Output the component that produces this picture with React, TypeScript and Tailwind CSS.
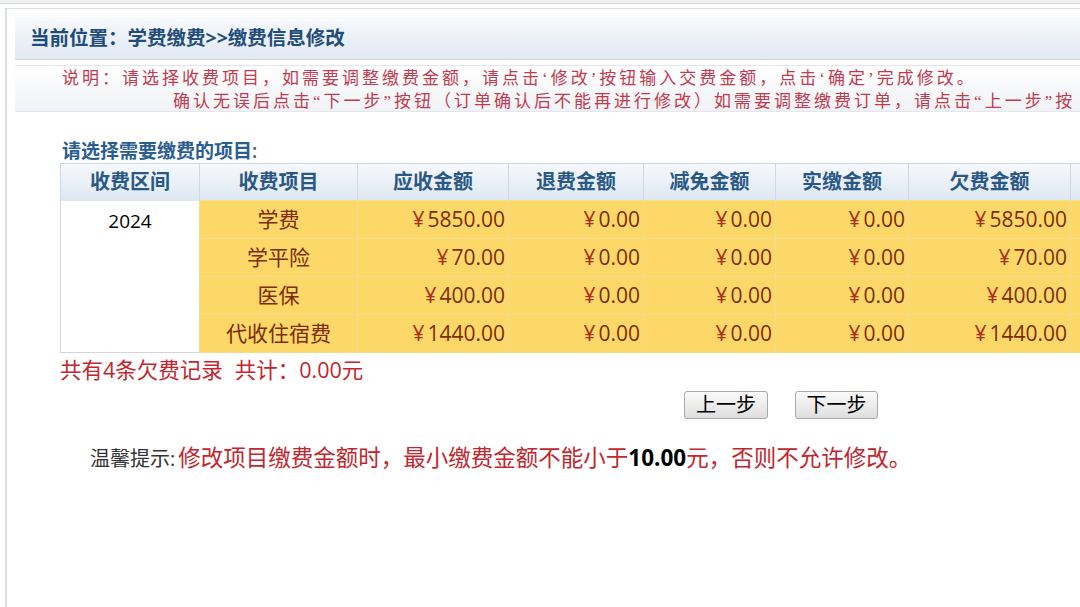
import React from 'react'

const sans = { fontFamily: '"Open Sans", "Noto Sans CJK SC", sans-serif' }
const serif = { fontFamily: '"Liberation Serif", "Noto Sans CJK SC", serif' }

const columns = [
  { label: '收费区间', w: 'w-[139px]' },
  { label: '收费项目', w: 'w-[158px]' },
  { label: '应收金额', w: 'w-[151px]' },
  { label: '退费金额', w: 'w-[135px]' },
  { label: '减免金额', w: 'w-[132px]' },
  { label: '实缴金额', w: 'w-[133px]' },
  { label: '欠费金额', w: 'w-[162px]' },
  { label: '', w: 'w-[120px]' },
]

const rows = [
  { item: '学费', due: '5850.00', owe: '5850.00' },
  { item: '学平险', due: '70.00', owe: '70.00' },
  { item: '医保', due: '400.00', owe: '400.00' },
  { item: '代收住宿费', due: '1440.00', owe: '1440.00' },
]

function Money({ v }: { v: string }) {
  return (
    <span className="text-[#7d2c0c]">
      <span className="mr-[3px] text-[#a8321c]">¥</span>
      {v}
    </span>
  )
}

const cell = 'border border-[#f3dd8c] bg-[#fcd868] p-0'

export default function App() {
  return (
    <div className="flex h-[607px] w-[1080px] flex-col overflow-hidden bg-white" style={sans}>
      {/* top strip */}
      <div className="h-[4px] shrink-0 border-b border-[#d6d9dc] bg-[#eef0f2]" />

      {/* main panel */}
      <div className="ml-[5px] mt-[4px] flex-1 border-l-2 border-t border-[#dcdfe2] pl-[8px] pt-[8px]">
        {/* location bar */}
        <div className="flex h-[43px] items-center border-b border-[#cdd6df] bg-gradient-to-b from-[#f7f9fc] to-[#e1e9f2] pl-[15px]">
          <span className="whitespace-nowrap text-[19.5px] font-bold text-[#1f4c78]">
            当前位置：学费缴费&gt;&gt;缴费信息修改
          </span>
        </div>

        {/* notice box */}
        <div
          className="mt-[5px] flex h-[47px] flex-col justify-center overflow-hidden border-y border-[#e3e6ea] bg-gradient-to-b from-white to-[#f0f2f5] pt-[3px] text-[17px] leading-[23px] tracking-[3px] text-[#c23a4e]"
          style={serif}
        >
          <div className="whitespace-nowrap pl-[47px]">
            说明：请选择收费项目，如需要调整缴费金额，请点击‘修改’按钮输入交费金额，点击‘确定’完成修改。
          </div>
          <div className="whitespace-nowrap pl-[158px]">
            确认无误后点击“下一步”按钮（订单确认后不能再进行修改）如需要调整缴费订单，请点击“上一步”按
          </div>
        </div>

        {/* item selection */}
        <div className="ml-[47px] mt-[27px] whitespace-nowrap text-[19px] font-semibold leading-[24px] text-[#2a5d92]">
          请选择需要缴费的项目:
        </div>

        <div className="ml-[45px]">
          <table className="w-[1130px] table-fixed border-collapse whitespace-nowrap">
            <thead>
              <tr className="h-[37px] bg-gradient-to-b from-[#f6f9fc] to-[#dde7f1]">
                {columns.map((c, i) => (
                  <th
                    key={i}
                    className={`${c.w} border-x border-t border-[#cfd9e4] p-0 text-center text-[20px] font-bold text-[#2a5886]`}
                  >
                    {c.label}
                  </th>
                ))}
              </tr>
            </thead>
            <tbody className="text-[21px]">
              {rows.map((r, i) => (
                <tr key={r.item} className="h-[38px]">
                  {i === 0 && (
                    <td
                      rowSpan={4}
                      className="border-b border-l border-[#d4d4d4] bg-white p-0 pt-[6px] text-center align-top text-[19px] text-black"
                    >
                      2024
                    </td>
                  )}
                  <td className={`${cell} text-center text-[#7d2c0c]`}>{r.item}</td>
                  <td className={`${cell} pr-[3px] text-right`}>
                    <Money v={r.due} />
                  </td>
                  <td className={`${cell} pr-[3px] text-right`}>
                    <Money v="0.00" />
                  </td>
                  <td className={`${cell} pr-[3px] text-right`}>
                    <Money v="0.00" />
                  </td>
                  <td className={`${cell} pr-[3px] text-right`}>
                    <Money v="0.00" />
                  </td>
                  <td className={`${cell} pr-[3px] text-right`}>
                    <Money v={r.owe} />
                  </td>
                  <td className={cell} />
                </tr>
              ))}
            </tbody>
          </table>

          {/* summary */}
          <div className="mt-[4px] flex whitespace-nowrap text-[21.5px] leading-[26px] text-[#c2262e]">
            <span>共有4条欠费记录</span>
            <span className="ml-[12px]">共计：0.00元</span>
          </div>
        </div>

        {/* step buttons */}
        <div className="ml-[669px] mt-[8px] flex gap-[27px]">
          <button className="h-[28px] w-[84px] rounded-[3px] border border-[#a9a9a9] bg-gradient-to-b from-[#fbfbfb] to-[#dedede] text-[20px] leading-none text-black">
            上一步
          </button>
          <button className="h-[28px] w-[83px] rounded-[3px] border border-[#a9a9a9] bg-gradient-to-b from-[#fbfbfb] to-[#dedede] text-[20px] leading-none text-black">
            下一步
          </button>
        </div>

        {/* tip */}
        <div className="ml-[75px] mt-[24px] flex items-baseline whitespace-nowrap leading-[30px]">
          <span className="text-[20px] text-[#333]">温馨提示:</span>
          <span className="ml-[3px] text-[22.5px] text-[#c2262e]">
            修改项目缴费金额时，最小缴费金额不能小于<b className="font-bold text-black">10.00</b>元，否则不允许修改。
          </span>
        </div>
      </div>
    </div>
  )
}
